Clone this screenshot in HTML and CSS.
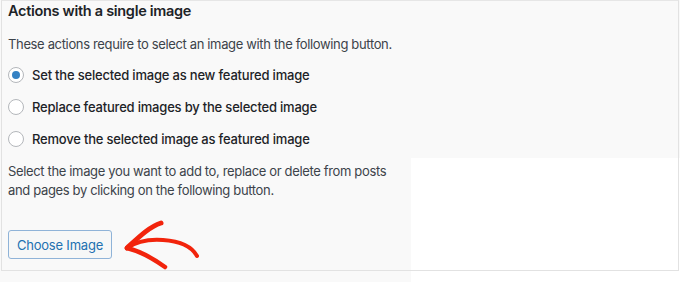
FILE: index.html
```html
<!DOCTYPE html>
<html>
<head>
<meta charset="utf-8">
<link rel="stylesheet" href="styles.css">
</head>
<body>
<div class="blank"></div>
<div class="panel">
  <h2 class="title">Actions with a single image</h2>
  <p class="desc">These actions require to select an image with the following button.</p>
  <div class="options">
    <label class="option"><span class="radio checked"></span>Set the selected image as new featured image</label>
    <label class="option"><span class="radio"></span>Replace featured images by the selected image</label>
    <label class="option"><span class="radio"></span>Remove the selected image as featured image</label>
  </div>
  <p class="desc note">Select the image you want to add to, replace or delete from posts<br>and pages by clicking on the following button.</p>
  <div class="actions">
    <button class="btn">Choose Image</button>
    <svg class="arrow" width="90" height="60" viewBox="0 0 90 60">
      <path d="M8 33 C20 22 30 12 42 8" fill="none" stroke="#f2240c" stroke-width="5" stroke-linecap="round"/>
      <path d="M8 33 C18 26 30 24 44 25 C58 26 72 30 78 41" fill="none" stroke="#f2240c" stroke-width="4" stroke-linecap="round"/>
      <path d="M8 33 C20 36 32 42 46 52" fill="none" stroke="#f2240c" stroke-width="4.5" stroke-linecap="round"/>
    </svg>
  </div>
</div>
</body>
</html>
```
FILE: styles.css
```css
html, body {
  margin: 0;
  padding: 0;
}
body {
  width: 680px;
  height: 282px;
  background: #f9f9f9;
  font-family: Inter, "Noto Sans", sans-serif;
  color: #3c434a;
  position: relative;
  overflow: hidden;
}
.blank {
  position: absolute;
  left: 411px;
  top: 158px;
  width: 269px;
  height: 124px;
  background: #ffffff;
}
.panel {
  position: relative;
  box-sizing: border-box;
  margin-left: 1px;
  width: 678px;
  height: 271px;
  border: 1px solid #e2e2e2;
  border-top-color: #e6e6e6;
  padding: 0 0 0 6px;
}
.title {
  margin: 0;
  padding-top: 0;
  font-size: 14.5px;
  letter-spacing: -0.3px;
  line-height: 20px;
  font-weight: 600;
  color: #1d2327;
}
.desc {
  margin: 13px 0 0;
  font-size: 13px;
  letter-spacing: -0.35px;
  line-height: 20px;
  color: #3c434a;
}
.options {
  display: flex;
  flex-direction: column;
  gap: 12px;
  margin-top: 11px;
}
.option {
  display: flex;
  align-items: center;
  gap: 8px;
  font-size: 13px;
  letter-spacing: -0.2px;
  line-height: 20px;
  font-weight: 500;
  color: #1d2327;
  margin-left: -1px;
}
.radio {
  box-sizing: border-box;
  width: 16px;
  height: 16px;
  border-radius: 50%;
  border: 1px solid #b4b7bb;
  background: #fff;
  margin-left: 1px;
  display: flex;
  align-items: center;
  justify-content: center;
}
.radio.checked::after {
  content: "";
  width: 8px;
  height: 8px;
  border-radius: 50%;
  background: #3582c4;
}
.note {
  margin-top: 13px;
  line-height: 19px;
}
.actions {
  display: flex;
  align-items: flex-start;
  margin-top: 30px;
  margin-left: -1px;
}
.btn {
  box-sizing: border-box;
  height: 29px;
  width: 104px;
  margin-left: 1px;
  border: 1px solid #8fb3d8;
  border-radius: 3px;
  background: #f6f7f7;
  color: #2271b1;
  font-family: Inter, "Noto Sans", sans-serif;
  font-size: 13px;
  letter-spacing: -0.2px;
  padding: 0;
}
.arrow {
  margin-left: 7px;
  margin-top: -15px;
}
```
